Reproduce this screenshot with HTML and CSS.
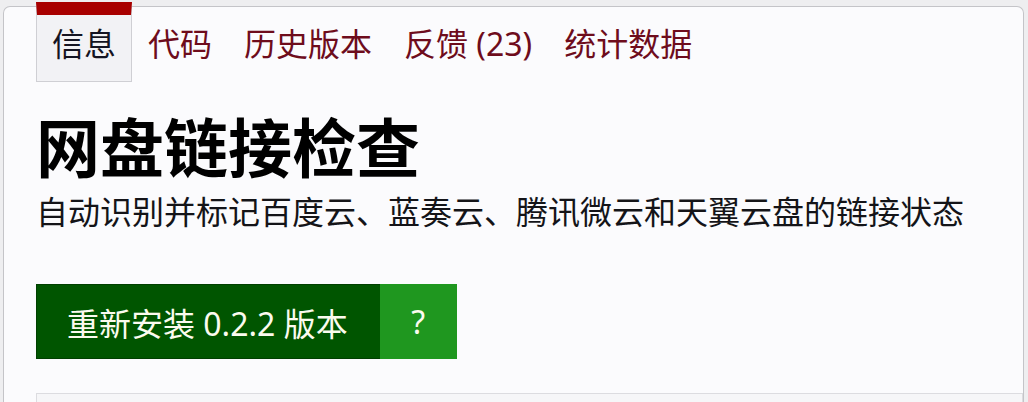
FILE: index.html
```html
<!DOCTYPE html>
<html lang="zh-CN">
<head>
<meta charset="utf-8">
<title>网盘链接检查</title>
<link rel="stylesheet" href="styles.css">
</head>
<body>
<div class="page">
  <nav class="tabs">
    <a class="tab active">信息</a>
    <a class="tab">代码</a>
    <a class="tab">历史版本</a>
    <a class="tab">反馈 (23)</a>
    <a class="tab">统计数据</a>
  </nav>
  <h1 class="title">网盘链接检查</h1>
  <p class="desc">自动识别并标记百度云、蓝奏云、腾讯微云和天翼云盘的链接状态</p>
  <div class="install">
    <a class="install-main">重新安装 0.2.2 版本</a>
    <a class="install-help">?</a>
  </div>
  <div class="panel"></div>
</div>
</body>
</html>
```

FILE: styles.css
```css
html, body {
  margin: 0;
  padding: 0;
}
body {
  background: #eeeef0;
  font-family: "Noto Sans", "Noto Sans CJK SC", sans-serif;
  overflow: hidden;
  height: 402px;
}
.page {
  margin: 6px 0 0 3px;
  width: 1021px;
  height: 396px;
  border: 1px solid #c4c4c8;
  border-bottom: none;
  border-radius: 7px 7px 0 0;
  background: #fbfbfd;
  padding-left: 32px;
  box-sizing: border-box;
}
.tabs {
  display: flex;
  margin-top: -5px;
}
.tab {
  font-size: 32px;
  line-height: 40px;
  padding: 9px 15px 17px;
  border: 1px solid transparent;
  border-top: 13px solid transparent;
  color: #6e0c1c;
  white-space: nowrap;
}
.tab.active {
  color: #141422;
  background: #f2f2f5;
  border-color: #cfcfd4;
  border-top-color: #a80000;
}
.title {
  margin: 30px 0 0;
  font-size: 64px;
  line-height: 72px;
  font-weight: 700;
  color: #000;
}
.desc {
  margin: 8px 0 0;
  font-size: 32px;
  line-height: 40px;
  color: #141418;
}
.install {
  display: flex;
  margin-top: 52px;
  height: 75px;
}
.install-main {
  display: flex;
  align-items: center;
  padding: 0 32px 0 30px;
  background: #005500;
  border: 1px solid #003f00;
  border-right: none;
  color: #fbfbef;
  font-size: 32px;
  box-sizing: border-box;
}
.install-help {
  display: flex;
  align-items: center;
  justify-content: center;
  width: 77px;
  background: #1f971f;
  color: #fbfbef;
  font-size: 32px;
}
.panel {
  margin-top: 34px;
  height: 8px;
  border: 1px solid #dcdce0;
  border-bottom: none;
  background: #f6f6f8;
}
```
